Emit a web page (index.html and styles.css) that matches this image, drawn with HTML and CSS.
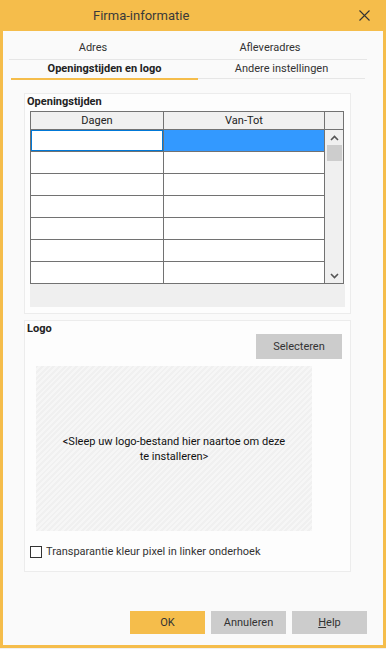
FILE: index.html
```html
<!DOCTYPE html>
<html lang="nl">
<head>
    <meta charset="UTF-8">
    <meta name="viewport" content="width=device-width, initial-scale=1.0">
    <title>Firma-informatie</title>
    <link rel="stylesheet" href="styles.css">
</head>
<body>
    <div class="window">
        <!-- titelbalk -->
        <div class="titlebar">
            <span class="title">Firma-informatie</span>
            <span class="close">
                <svg width="11" height="11" viewBox="0 0 11 11">
                    <path d="M0.5 0.5 L10.5 10.5 M10.5 0.5 L0.5 10.5" stroke="#333" stroke-width="1.1" fill="none"/>
                </svg>
            </span>
        </div>

        <div class="content">
            <!-- tabbladen -->
            <div class="tabrow tabrow-top">
                <div class="tab tab-a">Adres</div>
                <div class="tab tab-b">Afleveradres</div>
            </div>
            <div class="tabrow tabrow-bottom">
                <div class="tab tab-c active">Openingstijden en logo</div>
                <div class="tab tab-d">Andere instellingen</div>
            </div>

            <!-- openingstijden -->
            <div class="group hours">
                <div class="group-label">Openingstijden</div>
                <div class="grid">
                    <div class="grid-cols">
                        <div class="row header">
                            <div class="cell c1">Dagen</div>
                            <div class="cell c2">Van-Tot</div>
                        </div>
                        <div class="row">
                            <div class="cell c1 focus"></div>
                            <div class="cell c2 selected"></div>
                        </div>
                        <div class="row"><div class="cell c1"></div><div class="cell c2"></div></div>
                        <div class="row"><div class="cell c1"></div><div class="cell c2"></div></div>
                        <div class="row"><div class="cell c1"></div><div class="cell c2"></div></div>
                        <div class="row"><div class="cell c1"></div><div class="cell c2"></div></div>
                        <div class="row"><div class="cell c1"></div><div class="cell c2"></div></div>
                        <div class="row last"><div class="cell c1"></div><div class="cell c2"></div></div>
                    </div>
                    <div class="scrollcol">
                        <div class="scroll-head"></div>
                        <div class="scrollbar">
                            <svg class="arrow" width="9" height="6" viewBox="0 0 9 6">
                                <path d="M1 5 L4.5 1.5 L8 5" stroke="#555" stroke-width="1.6" fill="none"/>
                            </svg>
                            <div class="thumb"></div>
                            <svg class="arrow arrow-down" width="9" height="6" viewBox="0 0 9 6">
                                <path d="M1 1 L4.5 4.5 L8 1" stroke="#555" stroke-width="1.6" fill="none"/>
                            </svg>
                        </div>
                    </div>
                </div>
                <div class="grid-footer"></div>
            </div>

            <!-- logo -->
            <div class="group logo">
                <div class="logo-head">
                    <div class="group-label">Logo</div>
                    <button class="btn btn-select">Selecteren</button>
                </div>
                <div class="dropzone">
                    <span>&lt;Sleep uw logo-bestand hier naartoe om deze te installeren&gt;</span>
                </div>
                <label class="check">
                    <span class="box"></span>
                    Transparantie kleur pixel in linker onderhoek
                </label>
            </div>

            <!-- knoppen -->
            <div class="footer">
                <button class="btn btn-ok">OK</button>
                <button class="btn">Annuleren</button>
                <button class="btn"><u>H</u>elp</button>
            </div>
        </div>
    </div>
</body>
</html>
```

FILE: styles.css
```css
body {
    margin: 0;
    background-color: #f0f0f0;
    font-family: Roboto, "Noto Sans", sans-serif;
    font-size: 11px;
    color: #333;
}
.window {
    width: 386px;
    height: 648px;
    box-sizing: border-box;
    background-color: #f5bd4b;
    padding: 0 3px 3px 3px;
    display: flex;
    flex-direction: column;
}
.titlebar {
    height: 31px;
    display: flex;
    align-items: center;
    flex-shrink: 0;
}
.title {
    margin-left: 90px;
    font-size: 13px;
    color: #3a3a3a;
}
.close {
    margin-left: auto;
    margin-right: 13px;
    display: flex;
}
.content {
    flex: 1;
    background-color: #fafafa;
    display: flex;
    flex-direction: column;
}

/* tabbladen */
.tabrow {
    display: flex;
}
.tab {
    text-align: center;
    box-sizing: border-box;
}
.tabrow-top {
    margin: 7px 0 0 6px;
    width: 358px;
    height: 21px;
    border-bottom: 1px solid #e6e6e6;
}
.tabrow-top .tab {
    line-height: 20px;
}
.tab-a { width: 168px; }
.tab-b { width: 186px; }
.tabrow-bottom {
    margin-left: 8px;
    height: 20px;
    align-items: flex-end;
}
.tabrow-bottom .tab {
    height: 20px;
    line-height: 18px;
}
.tab-c {
    width: 187px;
    border-bottom: 2px solid #f5bd4b;
}
.tab-d {
    width: 167px;
    border-bottom: 1px solid #e6e6e6;
    margin-bottom: 1px;
    height: 19px !important;
}
.tab.active {
    font-weight: bold;
    color: #222;
}

/* groepen */
.group {
    margin-left: 21px;
    width: 327px;
    box-sizing: border-box;
    border: 1px solid #ececec;
    background-color: #fdfdfd;
}
.group-label {
    font-weight: bold;
    color: #222;
    padding-left: 2px;
    height: 17px;
    line-height: 16px;
}
.hours {
    margin-top: 13px;
    height: 221px;
}

/* raster */
.grid {
    margin-left: 5px;
    width: 314px;
    box-sizing: border-box;
    border: 1px solid #727272;
    display: flex;
}
.grid-cols {
    display: flex;
    flex-direction: column;
}
.row {
    display: flex;
    height: 22px;
    box-sizing: border-box;
    border-bottom: 1px solid #727272;
}
.row.header {
    height: 18px;
    background-color: #f0f0f0;
}
.row.last {
    height: 21px;
    border-bottom: none;
}
.cell {
    box-sizing: border-box;
    text-align: center;
    background-color: #fff;
}
.header .cell {
    background-color: #f0f0f0;
    line-height: 17px;
    color: #222;
}
.c1 {
    width: 133px;
    border-right: 1px solid #727272;
}
.c2 {
    width: 161px;
    border-right: 1px solid #727272;
}
.cell.focus {
    border: 1px solid #0078d7;
    border-right: 1px solid #727272;
    box-shadow: inset -1px 0 0 #0078d7;
}
.cell.selected {
    background-color: #3399ff;
}
.scrollcol {
    flex: 1;
    display: flex;
    flex-direction: column;
    background-color: #f0f0f0;
}
.scroll-head {
    height: 18px;
    box-sizing: border-box;
    border-bottom: 1px solid #727272;
}
.scrollbar {
    flex: 1;
    display: flex;
    flex-direction: column;
    align-items: center;
    padding: 5px 0 4px;
}
.thumb {
    width: 15px;
    height: 16px;
    background-color: #cdcdcd;
    margin-top: 4px;
}
.arrow-down {
    margin-top: auto;
}
.grid-footer {
    margin-left: 5px;
    width: 315px;
    height: 23px;
    background-color: #efefef;
}

/* logo */
.logo {
    margin-top: 6px;
    height: 252px;
}
.logo-head {
    display: flex;
    justify-content: space-between;
    align-items: flex-start;
}
.btn {
    font-family: Roboto, "Noto Sans", sans-serif;
    font-size: 11px;
    color: #333;
    border: none;
    background-color: #cccccc;
    width: 75px;
    height: 23px;
    padding: 0;
}
.btn-select {
    width: 86px;
    height: 25px;
    margin: 13px 8px 0 0;
}
.dropzone {
    margin: 7px 0 0 11px;
    width: 276px;
    height: 165px;
    box-sizing: border-box;
    padding: 0 25px;
    background: repeating-linear-gradient(135deg, #f0f0f0 0, #f0f0f0 2px, #f6f6f6 2px, #f6f6f6 4px);
    display: flex;
    align-items: center;
    justify-content: center;
    text-align: center;
    line-height: 15px;
    color: #111;
}
.check {
    display: flex;
    align-items: center;
    margin: 14px 0 0 5px;
    gap: 4px;
}
.box {
    width: 12px;
    height: 12px;
    box-sizing: border-box;
    border: 1px solid #333;
    background-color: #fff;
}

/* knoppen */
.footer {
    display: flex;
    justify-content: flex-end;
    gap: 6px;
    margin: 39px 16px 0 0;
}
.btn-ok {
    background-color: #f5bd4b;
}
```
